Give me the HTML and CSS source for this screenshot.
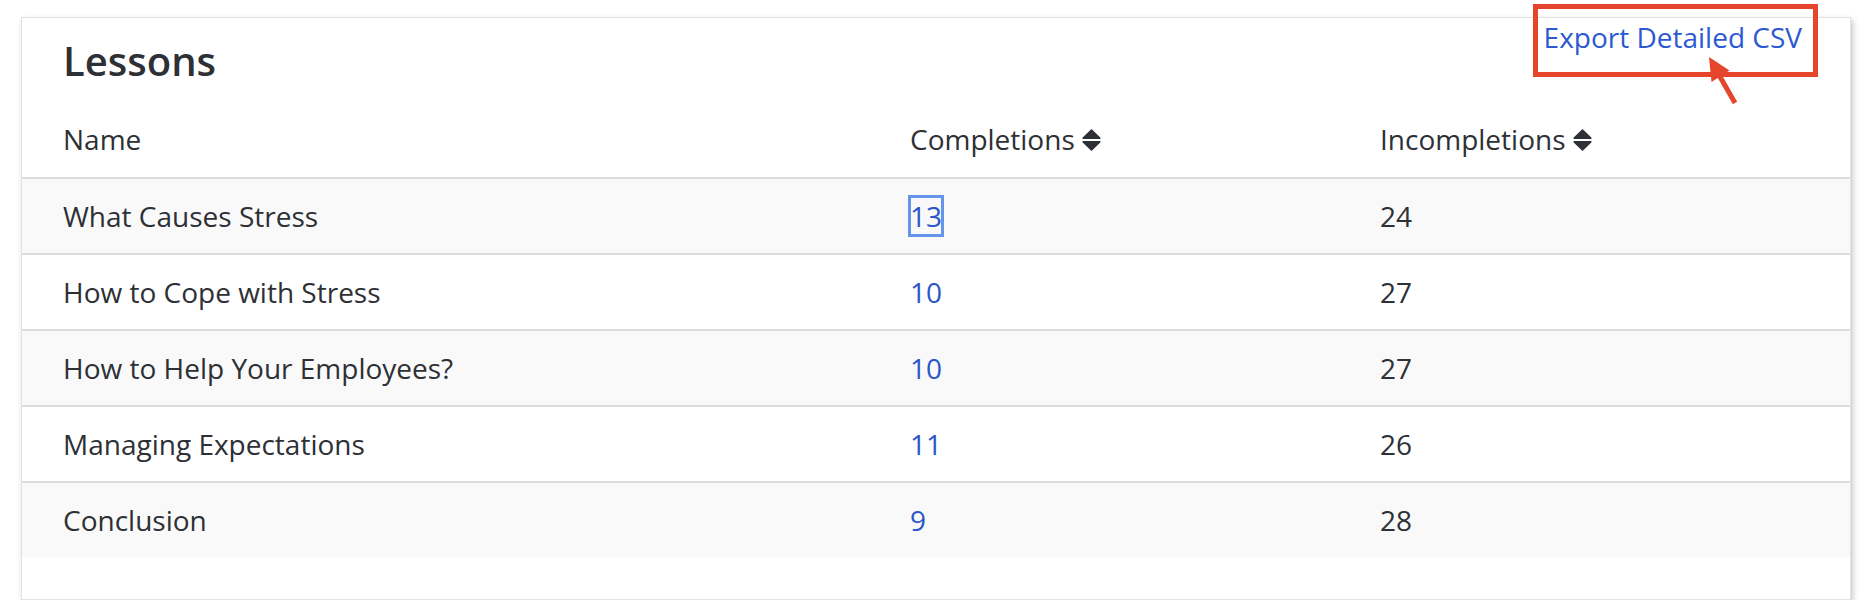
FILE: index.html
```html
<!DOCTYPE html>
<html lang="en">
<head>
<meta charset="utf-8">
<title>Lessons</title>
<link rel="stylesheet" href="styles.css">
</head>
<body>
<section class="card">
  <header class="card-head">
    <h2 class="title">Lessons</h2>
    <a class="export" href="#">Export Detailed CSV</a>
  </header>
  <div class="callout-box"></div>
  <svg class="callout-arrow" width="44" height="60" viewBox="0 0 44 60" aria-hidden="true">
    <line x1="35" y1="53" x2="19" y2="25" stroke="#e4452b" stroke-width="5" stroke-linecap="butt"/>
    <polygon points="9,7 29.5,20.5 11.5,32" fill="#e4452b"/>
  </svg>
  <table class="lessons">
    <colgroup>
      <col class="c-name">
      <col class="c-comp">
      <col class="c-inc">
    </colgroup>
    <thead>
      <tr>
        <th>Name</th>
        <th>Completions <svg class="sort" width="19" height="22" viewBox="0 0 19 22"><path d="M9.5 1.2 L17.8 9.2 L1.2 9.2 Z M1.2 12.8 L17.8 12.8 L9.5 20.8 Z" fill="#2d3035" stroke="#2d3035" stroke-width="1.6" stroke-linejoin="round"/></svg></th>
        <th>Incompletions <svg class="sort" width="19" height="22" viewBox="0 0 19 22"><path d="M9.5 1.2 L17.8 9.2 L1.2 9.2 Z M1.2 12.8 L17.8 12.8 L9.5 20.8 Z" fill="#2d3035" stroke="#2d3035" stroke-width="1.6" stroke-linejoin="round"/></svg></th>
      </tr>
    </thead>
    <tbody>
      <tr><td>What Causes Stress</td><td><a class="num focused" href="#">13</a></td><td>24</td></tr>
      <tr><td>How to Cope with Stress</td><td><a class="num" href="#">10</a></td><td>27</td></tr>
      <tr><td>How to Help Your Employees?</td><td><a class="num" href="#">10</a></td><td>27</td></tr>
      <tr><td>Managing Expectations</td><td><a class="num" href="#">11</a></td><td>26</td></tr>
      <tr><td>Conclusion</td><td><a class="num" href="#">9</a></td><td>28</td></tr>
    </tbody>
  </table>
</section>
</body>
</html>
```
FILE: styles.css
```css
* { box-sizing: border-box; }
html, body { margin: 0; padding: 0; background: #ffffff; }
body {
  font-family: "Open Sans", "Noto Sans", sans-serif;
  color: #2d3035;
}
.card {
  position: relative;
  margin: 17px 0 0 21px;
  width: 1830px;
  height: 583px;
  background: #ffffff;
  border: 1px solid #e2e2e2;
  box-shadow: 2px 3px 6px rgba(0, 0, 0, 0.22);
}
.card-head {
  display: flex;
  justify-content: space-between;
  align-items: flex-start;
  padding: 0 48px 0 41px;
}
.title {
  margin: 16px 0 0 0;
  font-size: 40px;
  line-height: 54px;
  font-weight: 600;
  color: #2d3035;
}
.export {
  font-size: 28px;
  line-height: 38px;
  color: #2c59d2;
  text-decoration: none;
}
.callout-box {
  position: absolute;
  left: 1511px;
  top: -14px;
  width: 285px;
  height: 73px;
  border: 5px solid #e4452b;
}
.callout-arrow {
  position: absolute;
  left: 1678px;
  top: 32px;
}
.lessons {
  margin-top: 13px;
  width: 100%;
  border-collapse: collapse;
  table-layout: fixed;
  font-size: 28px;
  line-height: 38px;
}
.c-name { width: 847px; }
.c-comp { width: 470px; }
.c-inc { width: 511px; }
.lessons th {
  text-align: left;
  font-weight: 400;
  padding: 19px 0 19px 41px;
  border-bottom: 2px solid #dcdcdc;
  white-space: nowrap;
}
.lessons td {
  padding: 18px 0 18px 41px;
  white-space: nowrap;
}
.lessons tbody tr + tr td { border-top: 2px solid #dcdcdc; }
.lessons tbody tr:nth-child(odd) { background: #f9f9f9; }
.sort {
  vertical-align: -1px;
  margin-left: 0;
}
.num {
  color: #2a56c9;
  text-decoration: none;
}
.focused {
  outline: 3px solid #6694ea;
  outline-offset: -1px;
}
```
